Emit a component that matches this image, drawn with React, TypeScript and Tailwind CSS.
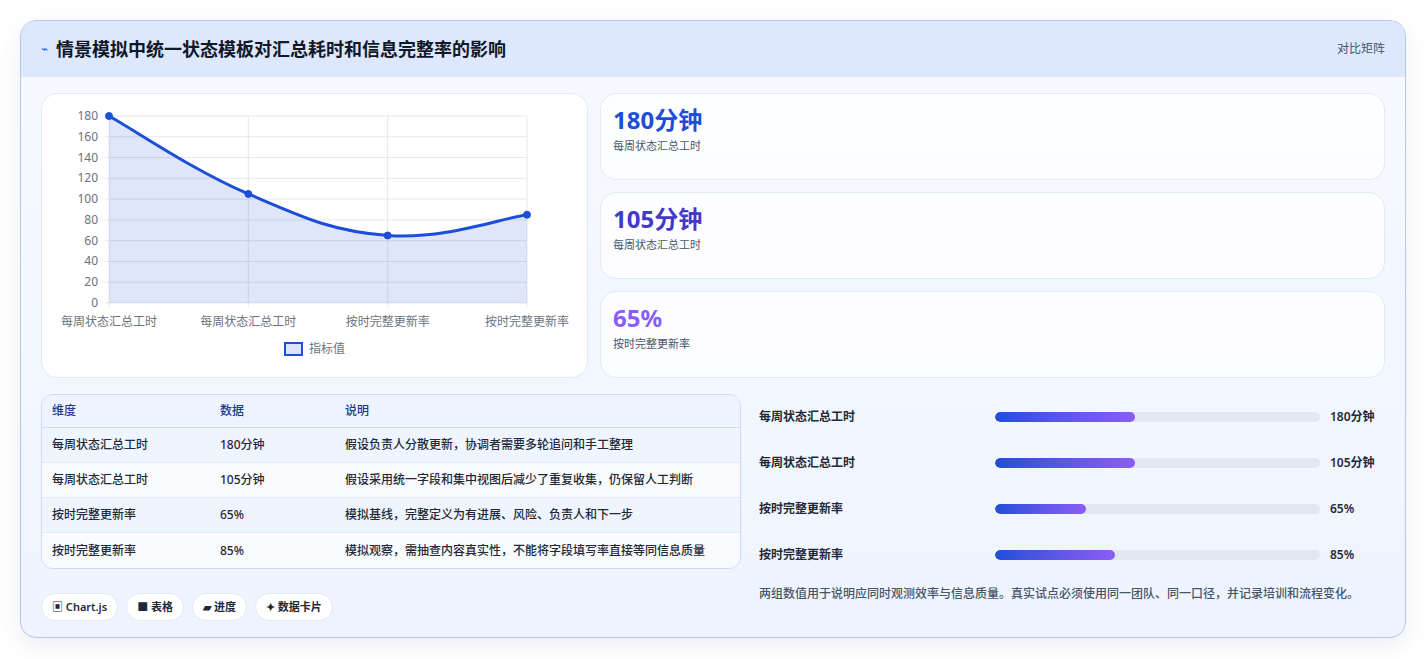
const font = { fontFamily: '"Noto Sans", "Noto Sans CJK SC", sans-serif' };

const rows = [
  { k: "每周状态汇总工时", v: "180分钟", d: "假设负责人分散更新，协调者需要多轮追问和手工整理", p: 43 },
  { k: "每周状态汇总工时", v: "105分钟", d: "假设采用统一字段和集中视图后减少了重复收集，仍保留人工判断", p: 43 },
  { k: "按时完整更新率", v: "65%", d: "模拟基线，完整定义为有进展、风险、负责人和下一步", p: 28 },
  { k: "按时完整更新率", v: "85%", d: "模拟观察，需抽查内容真实性，不能将字段填写率直接等同信息质量", p: 37 },
];

const stats = [
  { v: "180分钟", l: "每周状态汇总工时", c: "text-[#1d4ed8]" },
  { v: "105分钟", l: "每周状态汇总工时", c: "text-[#4338ca]" },
  { v: "65%", l: "按时完整更新率", c: "text-[#8b5cf6]" },
];

function Chart() {
  const x0 = 67, x1 = 485, y0 = 22, y1 = 209;
  const vals = [180, 105, 65, 85];
  const pts = vals.map((v, i) => [x0 + (i * (x1 - x0)) / 3, y1 - (v / 180) * (y1 - y0)]);
  let d = `M${pts[0][0]},${pts[0][1]}`;
  for (let i = 0; i < 3; i++) {
    const p0 = pts[Math.max(0, i - 1)], p1 = pts[i], p2 = pts[i + 1], p3 = pts[Math.min(3, i + 2)];
    const t = 0.2;
    const c1 = [p1[0] + (p2[0] - p0[0]) * t, p1[1] + (p2[1] - p0[1]) * t];
    const c2 = [p2[0] - (p3[0] - p1[0]) * t, p2[1] - (p3[1] - p1[1]) * t];
    d += ` C${c1[0]},${c1[1]} ${c2[0]},${c2[1]} ${p2[0]},${p2[1]}`;
  }
  const area = `${d} L${x1},${y1} L${x0},${y1} Z`;
  const labels = ["每周状态汇总工时", "每周状态汇总工时", "按时完整更新率", "按时完整更新率"];
  return (
    <svg width="546" height="284" className="block" style={font}>
      {[0, 20, 40, 60, 80, 100, 120, 140, 160, 180].map((v) => {
        const y = y1 - (v / 180) * (y1 - y0);
        return (
          <g key={v}>
            <line x1={x0 - 4} x2={x1} y1={y} y2={y} stroke="#e5e7eb" />
            <text x={x0 - 11} y={y + 4} textAnchor="end" fontSize="12" fill="#6b7280">{v}</text>
          </g>
        );
      })}
      {pts.map((p, i) => (
        <line key={i} x1={p[0]} x2={p[0]} y1={y0} y2={y1 + 4} stroke="#e5e7eb" />
      ))}
      <path d={area} fill="#1d4ed8" fillOpacity="0.14" />
      <path d={d} fill="none" stroke="#1d4ed8" strokeWidth="3" />
      {pts.map((p, i) => (
        <circle key={i} cx={p[0]} cy={p[1]} r="3.5" fill="#1d4ed8" stroke="#1d4ed8" strokeWidth="1" />
      ))}
      {labels.map((l, i) => (
        <text key={i} x={pts[i][0]} y={232} textAnchor="middle" fontSize="12" fill="#6b7280">{l}</text>
      ))}
      <rect x="243" y="249" width="17" height="12" fill="#dbe4fa" stroke="#1d4ed8" strokeWidth="2" />
      <text x="267" y="259" fontSize="12" fill="#6b7280">指标值</text>
    </svg>
  );
}

export default function App() {
  return (
    <div className="min-h-screen bg-white p-5" style={font}>
      <div className="rounded-2xl border border-[#b7c6ee] overflow-hidden bg-gradient-to-b from-[#f7f9ff] to-[#eef4ff] shadow-[0_8px_24px_rgba(30,41,80,0.08)]">
        <div className="h-14 bg-[#dde7fd] flex items-center justify-between px-5">
          <div className="flex items-center gap-2">
            <span className="text-[#2563eb] text-xs">⌁</span>
            <h1 className="text-[18px] font-bold text-[#111827]">情景模拟中统一状态模板对汇总耗时和信息完整率的影响</h1>
          </div>
          <span className="text-xs text-[#475569]">对比矩阵</span>
        </div>
        <div className="px-5 pt-4 pb-4">
          <div className="flex gap-3">
            <div className="w-[547px] h-[285px] bg-white rounded-2xl border border-[#e3e9f6]">
              <Chart />
            </div>
            <div className="flex-1 flex flex-col gap-3">
              {stats.map((s, i) => (
                <div key={i} className="h-[87px] bg-white/80 rounded-2xl border border-[#e3e9f6] px-3 pt-2.5">
                  <div className={`text-[24px] font-bold leading-8 ${s.c}`}>{s.v}</div>
                  <div className="text-[11px] text-[#475569] mt-0.5">{s.l}</div>
                </div>
              ))}
            </div>
          </div>
          <div className="flex gap-3 mt-4">
            <div className="w-[700px]">
              <div className="rounded-xl border border-[#cfdaf2] overflow-hidden text-[12px] font-medium">
                <div className="grid grid-cols-[168px_125px_1fr] h-[33px] items-center px-2.5 bg-[#eef4ff] border-b border-[#cfdaf2] text-[#1e3a8a]">
                  <span>维度</span><span>数据</span><span>说明</span>
                </div>
                {rows.map((r, i) => (
                  <div key={i} className={`grid grid-cols-[168px_125px_1fr] h-[35px] items-center px-2.5 text-[#1f2937] ${i < 3 ? "border-b border-[#e3e9f6]" : ""} ${i % 2 ? "bg-[#f8fafc]" : "bg-[#eff5ff]"}`}>
                    <span>{r.k}</span><span>{r.v}</span><span>{r.d}</span>
                  </div>
                ))}
              </div>
              <div className="flex gap-2 mt-6 text-[11px] font-semibold text-[#1f2937]">
                {["▣ Chart.js", "■ 表格", "▰ 进度", "✦ 数据卡片"].map((c) => (
                  <span key={c} className="h-7 px-2.5 rounded-full bg-white border border-[#e3e9f6] flex items-center">{c}</span>
                ))}
              </div>
            </div>
            <div className="flex-1 pl-1.5">
              {rows.map((r, i) => (
                <div key={i} className="flex items-center h-[46px] text-[12px] font-semibold text-[#1f2937]">
                  <span className="w-[236px]">{r.k}</span>
                  <div className="w-[325px] h-2.5 rounded-full bg-[#e2e8f0] overflow-hidden">
                    <div className="h-full rounded-full bg-gradient-to-r from-[#1d4ed8] to-[#8b5cf6]" style={{ width: `${r.p}%` }} />
                  </div>
                  <span className="ml-2.5">{r.v}</span>
                </div>
              ))}
              <p className="mt-1.5 text-[12px] leading-5 text-[#475569] font-medium pr-2">
                两组数值用于说明应同时观测效率与信息质量。真实试点必须使用同一团队、同一口径，并记录培训和流程变化。
              </p>
            </div>
          </div>
        </div>
      </div>
    </div>
  );
}
